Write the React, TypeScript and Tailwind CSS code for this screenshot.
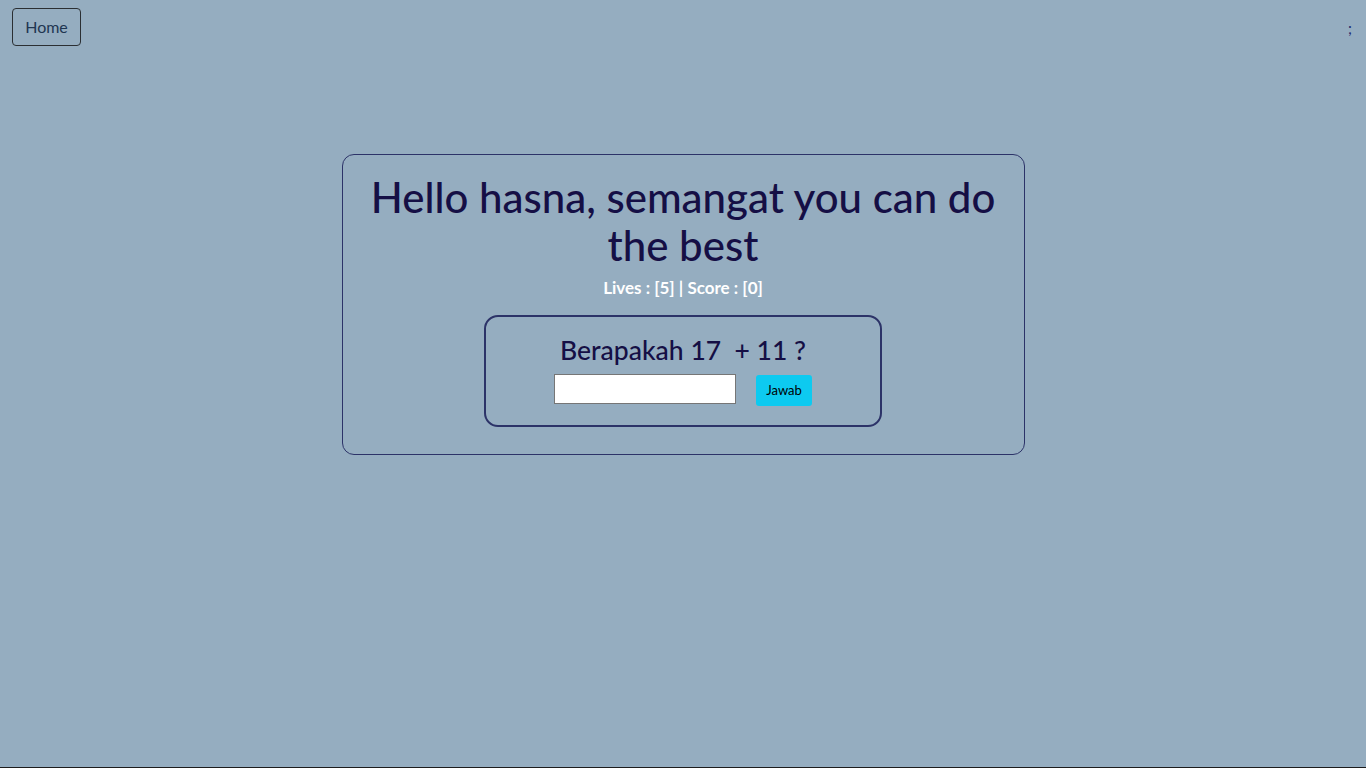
export default function App() {
	return (
		<div className="flex h-screen flex-col border-b border-[#1c1c1c] bg-[#95adc0] font-['Lato',sans-serif]">
			<header className="flex items-start justify-between px-3 pt-2">
				<button className="h-[38px] w-[69px] rounded-[4px] border border-[#2b2f33] text-[16px] text-[#1f3652]">
					Home
				</button>
				<span className="mr-[2px] mt-[13px] text-[15px] leading-none text-[#1f2a6e]">;</span>
			</header>

			<main className="mx-auto mt-[108px] w-[683px] rounded-[12px] border border-[#2c3368] px-5 pb-[27px] pt-[18px] text-center">
				<h1 className="mb-2 text-[42px] font-medium leading-[48px] text-[#150f45]">
					Hello hasna, semangat you can do the best
				</h1>
				<p className="mb-4 text-[17px] font-bold leading-[22px] text-white">Lives : [5] | Score : [0]</p>

				<div className="mx-auto w-[398px] rounded-[14px] border-2 border-[#2c3368] px-4 pb-[21px] pt-[16px]">
					<h3 className="mb-[7px] text-[26.5px] font-medium leading-[34px] text-[#150f45]">Berapakah 17 &nbsp;+ 11 ?</h3>
					<div className="flex items-end justify-center gap-5">
						<input className="h-[30px] w-[182px] border border-[#767676] bg-white" type="text" />
						<button className="mb-[-2px] h-[31px] w-[56px] rounded-[3px] bg-[#0dcaf0] text-[13px] text-black">
							Jawab
						</button>
					</div>
				</div>
			</main>
		</div>
	);
}
